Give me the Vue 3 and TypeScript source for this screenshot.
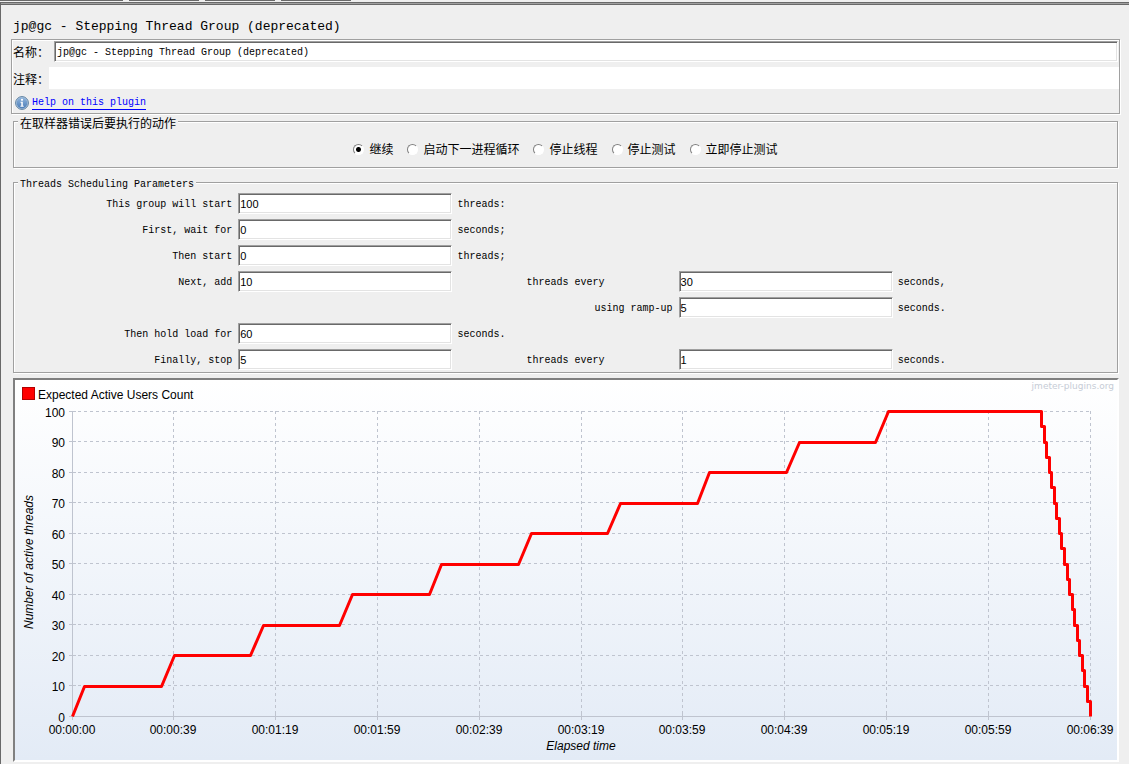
<script setup lang="ts">
import { ref } from 'vue'

interface Option { value: string; label: string }

const name = ref('jp@gc - Stepping Thread Group (deprecated)')
const comment = ref('')
const action = ref('continue')
const actions: Option[] = [
  { value: 'continue', label: '继续' },
  { value: 'next', label: '启动下一进程循环' },
  { value: 'stopthread', label: '停止线程' },
  { value: 'stoptest', label: '停止测试' },
  { value: 'stopnow', label: '立即停止测试' },
]

interface Cell { id: string; label: string; value: string; suffix: string; center?: boolean }
interface Row { first?: Cell; second?: Cell }

const rows = ref<Row[]>([
  { first: { id: 'total', label: 'This group will start', value: '100', suffix: 'threads:' } },
  { first: { id: 'delay', label: 'First, wait for', value: '0', suffix: 'seconds;' } },
  { first: { id: 'burst', label: 'Then start', value: '0', suffix: 'threads;' } },
  {
    first: { id: 'add', label: 'Next, add', value: '10', suffix: '' },
    second: { id: 'every', label: 'threads every', value: '30', suffix: 'seconds,', center: true },
  },
  { second: { id: 'ramp', label: 'using ramp-up', value: '5', suffix: 'seconds.' } },
  { first: { id: 'hold', label: 'Then hold load for', value: '60', suffix: 'seconds.' } },
  {
    first: { id: 'stop', label: 'Finally, stop', value: '5', suffix: '' },
    second: { id: 'stopevery', label: 'threads every', value: '1', suffix: 'seconds.', center: true },
  },
])

// Plot area inside the 1102 x 380 chart canvas
const left = 57
const right = 1075
const top = 31
const bottom = 336
const duration = 399

const px = (t: number): number => left + ((right - left) * t) / duration
const py = (n: number): number => bottom - ((bottom - top) * n) / 100

const times = ['00:00:00', '00:00:39', '00:01:19', '00:01:59', '00:02:39', '00:03:19', '00:03:59', '00:04:39', '00:05:19', '00:05:59', '00:06:39']
const xTicks = times.map((label, i) => ({ label, x: Math.floor(left + ((right - left) * i) / 10) }))
const yTicks = Array.from({ length: 11 }, (_, i) => ({ label: i * 10, y: Math.floor(py(i * 10)) }))

const points: [number, number][] = [[0, 0]]
for (let i = 1; i <= 10; i++) {
  const start = (i - 1) * 35
  points.push([start + 5, i * 10])
  points.push([i === 10 ? 380 : start + 35, i * 10])
}
for (let k = 0; k < 20; k++) {
  points.push([380 + k, 100 - k * 5])
  points.push([380 + k, 95 - k * 5])
}
const line = points.map(([t, n]) => `${Math.floor(px(t)) + 0.5},${Math.round(py(n)) + 0.5}`).join(' ')
</script>

<template>
  <div class="window">
    <div class="tabs"><i class="t1"></i><i></i><i></i><i></i></div>
    <main class="pane">
      <h1>jp@gc - Stepping Thread Group (deprecated)</h1>

      <section class="info">
        <div class="line">
          <label class="zh" for="name">名称：</label>
          <input id="name" v-model="name" class="field" type="text">
        </div>
        <div class="line comment">
          <label class="zh" for="comment">注释：</label>
          <input id="comment" v-model="comment" type="text">
        </div>
        <div class="help">
          <svg width="14" height="14" viewBox="0 0 14 14" aria-hidden="true">
            <defs>
              <linearGradient id="ball" x1="0" y1="0" x2="0" y2="1">
                <stop offset="0" stop-color="#8fb4dc" />
                <stop offset="1" stop-color="#4b7db8" />
              </linearGradient>
            </defs>
            <circle cx="7" cy="7" r="6.4" fill="#b4cae2" stroke="#5b7f9f" stroke-width="1" />
            <circle cx="7" cy="7" r="5.4" fill="url(#ball)" />
            <circle cx="7" cy="3.8" r="1.1" fill="#fff" />
            <path d="M5.5 5.8H7.8V9.8H8.7V10.7H5.4V9.8H6.3V6.7H5.5Z" fill="#fff" />
          </svg>
          <a href="#">Help on this plugin</a>
        </div>
      </section>

      <fieldset class="actions">
        <legend class="zh">在取样器错误后要执行的动作</legend>
        <label v-for="a in actions" :key="a.value" class="zh radio">
          <input v-model="action" type="radio" name="action" :value="a.value">
          <span>{{ a.label }}</span>
        </label>
      </fieldset>

      <fieldset class="params">
        <legend>Threads Scheduling Parameters</legend>
        <div v-for="(row, i) in rows" :key="i" class="row">
          <template v-if="row.first">
            <label :for="row.first.id" class="right">{{ row.first.label }}</label>
            <input :id="row.first.id" v-model="row.first.value" class="field num" type="text">
          </template>
          <template v-else><span></span><span></span></template>
          <template v-if="row.second">
            <label :for="row.second.id" :class="row.second.center ? 'center' : 'right'">{{ row.second.label }}</label>
            <input :id="row.second.id" v-model="row.second.value" class="field num" type="text">
            <span class="suffix">{{ row.second.suffix }}</span>
          </template>
          <span v-else-if="row.first" class="suffix">{{ row.first.suffix }}</span>
        </div>
      </fieldset>

      <section class="chart">
        <svg viewBox="0 0 1102 380" role="img" aria-label="Expected Active Users Count">
          <defs>
            <linearGradient id="sky" x1="0" y1="0" x2="0" y2="1">
              <stop offset="0" stop-color="#ffffff" />
              <stop offset="1" stop-color="#e3ebf6" />
            </linearGradient>
          </defs>
          <rect width="1102" height="380" fill="url(#sky)" />
          <rect x="7.5" y="7.5" width="12" height="12" fill="#ff0000" stroke="#b20000" />
          <text x="23" y="19">Expected Active Users Count</text>
          <text class="mark" x="1099" y="9" text-anchor="end">jmeter-plugins.org</text>
          <g class="grid">
            <line v-for="t in yTicks.slice(1)" :key="t.y" :x1="left" :x2="right" :y1="t.y + 0.5" :y2="t.y + 0.5" />
            <line v-for="t in xTicks.slice(1)" :key="t.x" :y1="top" :y2="bottom" :x1="t.x + 0.5" :x2="t.x + 0.5" />
          </g>
          <g class="axis">
            <line :x1="left + 0.5" :x2="left + 0.5" :y1="top" :y2="bottom + 4" />
            <line :x1="left - 3" :x2="right" :y1="bottom + 0.5" :y2="bottom + 0.5" />
            <line v-for="t in yTicks" :key="t.y" :x1="left - 3" :x2="left + 4" :y1="t.y + 0.5" :y2="t.y + 0.5" />
            <line v-for="t in xTicks" :key="t.x" :y1="bottom - 3" :y2="bottom + 4" :x1="t.x + 0.5" :x2="t.x + 0.5" />
          </g>
          <text v-for="t in yTicks" :key="'y' + t.y" x="50" :y="t.y + 6" text-anchor="end">{{ t.label }}</text>
          <text v-for="t in xTicks" :key="'x' + t.x" :x="t.x" y="354" text-anchor="middle">{{ t.label }}</text>
          <text class="title" x="566" y="370" text-anchor="middle">Elapsed time</text>
          <text class="title" transform="translate(18 182) rotate(-90)" text-anchor="middle">Number of active threads</text>
          <polyline :points="line" fill="none" stroke="#ff0000" stroke-width="3" stroke-linejoin="round" />
        </svg>
      </section>
    </main>
  </div>
</template>

<style>
html, body, #app { min-height: 100%; background: #efefef; }
</style>

<style scoped>
.window {
  box-sizing: border-box;
  min-height: 100vh;
  background: #efefef;
  color: #000;
  font: 10px/14px "Liberation Mono", "Noto Sans CJK SC", monospace;
}
.tabs { display: flex; gap: 6px; height: 2px; }
.tabs i { width: 70px; height: 1px; background: #696969; }
.tabs .t1 { width: 123px; }
.pane {
  box-sizing: border-box;
  min-height: calc(100vh - 2px);
  padding: 12px 10px 0 12px;
  border-left: 1px solid #696969;
  border-top: 1px solid #696969;
  box-shadow: inset 0 1px #a0a0a0, inset 0 2px #696969;
}
h1 { margin: 0; font-size: 13px; line-height: 24px; font-weight: 400; height: 24px; }
.zh { font: 12px/16px "Liberation Sans", "Noto Sans CJK SC", sans-serif; }
input { font: inherit; color: inherit; border-radius: 0; outline: 0; }
.field {
  box-sizing: border-box;
  height: 21px;
  padding: 2px 1px 0 2px;
  background: #fff;
  border: 1px solid;
  border-color: #a0a0a0 #fff #fff #a0a0a0;
  box-shadow: inset 1px 1px #696969, inset -1px -1px #e3e3e3;
}
.info {
  margin: 0 -1px 0 -2px;
  padding: 1px 0 0;
  border: 1px solid #a0a0a0;
  box-shadow: 1px 1px #fff, inset 1px 1px #fff;
}
.line { display: flex; align-items: center; margin-right: 1px; height: 21px; }
.line label { flex: none; box-sizing: border-box; width: 42px; padding: 3px 0 0 1px; white-space: nowrap; }
.line input { flex: 1; min-width: 0; }
.line.comment { margin: 5px 0 0; height: 22px; }
.comment label { width: 37px; }
.comment input { height: 22px; box-sizing: border-box; border: 0; background: #fff; }
.help { display: flex; align-items: center; gap: 3px; height: 24px; padding: 3px 0 0 3px; box-sizing: border-box; }
.help a { padding-top: 2px; color: #00f; line-height: 12px; text-decoration: none; border-bottom: 1px solid #00f; }
fieldset {
  min-width: 0;
  margin: 0 1px 0 0;
  padding: 0 1px;
  border: 1px solid #a0a0a0;
  box-shadow: 1px 1px #fff, inset 1px 1px #fff;
}
legend { margin: 0 0 0 3px; padding: 6px 2px 0; background: linear-gradient(#efefef, #efefef) 0 100% / 100% 16px no-repeat; }
.actions { display: flex; justify-content: center; gap: 14px; margin-top: -4px; padding-bottom: 9px; }
.radio { display: flex; align-items: center; gap: 5px; margin-top: 8px; }
.radio input {
  appearance: none;
  box-sizing: border-box;
  width: 11px;
  height: 11px;
  margin: 0;
  border: 1px solid;
  border-color: #808080 #fff #fff #808080;
  border-radius: 50%;
  background: #fff;
}
.radio span { padding-top: 2px; }
.radio input:checked { background: radial-gradient(circle, #000 2px, #fff 3px); }
.params { margin-top: 4px; }
.params legend { margin-bottom: -2px; }
.row { display: grid; grid-template-columns: repeat(5, 1fr); align-items: center; height: 26px; }
.row label, .row span { padding-top: 3px; }
.row .right { text-align: right; padding-right: 3px; }
.center { text-align: center; }
.row .suffix { padding-left: 2px; }
.row .num { width: auto; min-width: 0; margin: 0 3px; padding: 1px 1px 0; font: 11px/14px "Liberation Sans", sans-serif; }
.chart {
  margin-top: 5px;
  border: 2px solid;
  border-color: #808080 #fff #fff #808080;
}
.chart svg { display: block; width: 100%; height: auto; font: 12px "Liberation Sans", sans-serif; }
.mark { font-family: "DejaVu Sans", sans-serif; font-size: 9px; fill: #c6ccd6; }
.title { font-style: italic; }
.grid line { stroke: #bfc4cf; stroke-dasharray: 3 3; }
.axis line { stroke: #bfc4cf; }
</style>
